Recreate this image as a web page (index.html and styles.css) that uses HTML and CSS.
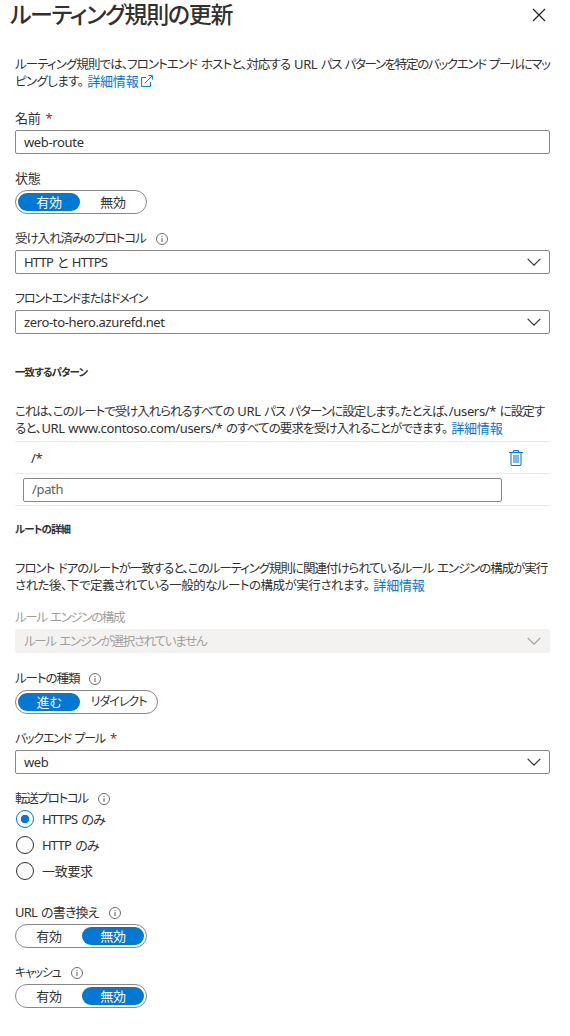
FILE: index.html
```
<!DOCTYPE html>
<html lang="ja">
<head>
    <meta charset="UTF-8">
    <meta name="viewport" content="width=device-width, initial-scale=1.0">
    <title>ルーティング規則の更新</title>
    <link rel="stylesheet" href="styles.css">
</head>
<body>

    <!-- 共通アイコン -->
    <svg class="sprite" aria-hidden="true">
        <symbol id="info" viewBox="0 0 12 12">
            <circle cx="6" cy="6" r="5.5" fill="none" stroke="#605e5c" stroke-width="0.9"/>
            <path d="M6 5v4M6 3v1" stroke="#605e5c" stroke-width="1"/>
        </symbol>
        <symbol id="chevron" viewBox="0 0 14 8">
            <path d="M.7.9 7 7.1 13.3.9" fill="none" stroke="currentColor" stroke-width="1.2"/>
        </symbol>
    </svg>

    <header class="header">
        <h1>ルーティング規則の更新</h1>
        <button class="close" type="button" aria-label="閉じる">
            <svg width="14" height="14" viewBox="0 0 14 14"><path d="M1 1l12 12M13 1L1 13" stroke="#222" stroke-width="1.2"/></svg>
        </button>
    </header>

    <main class="content">
        <p class="text">
            <span class="line"><span class="ls-9">ルーティング規則では、フロントエンド ホストと、対応する </span><span class="en">URL </span><span class="ls-14">パス パターンを特定のバックエンド プールにマッ</span></span>
            <span class="line"><span class="ls-6">ピングします。</span><a class="link" href="#">詳細情報<svg class="external" width="12" height="12" viewBox="0 0 12 12"><path d="M5 2.5H.6v8.9h8.9V7M3.8 8.2 11.2.8M7.3.6h4.1v4.1" fill="none" stroke="currentColor"/></svg></a></span>
        </p>

        <div class="field">
            <div class="label"><span class="kanji">名前</span><span class="required">*</span></div>
            <div class="input"><span class="en">web-route</span></div>
        </div>

        <div class="field">
            <div class="label"><span class="kanji">状態</span></div>
            <div class="toggle"><span class="option on">有効</span><span class="option">無効</span></div>
        </div>

        <div class="field">
            <div class="label"><span class="ls-11">受け入れ済みのプロトコル</span><svg class="info"><use href="#info"/></svg></div>
            <div class="input"><span class="mixed">HTTP と HTTPS</span><svg class="chevron"><use href="#chevron"/></svg></div>
        </div>

        <div class="field">
            <div class="label"><span class="kata">フロントエンドまたはドメイン</span></div>
            <div class="input"><span class="en">zero-to-hero.azurefd.net</span><svg class="chevron"><use href="#chevron"/></svg></div>
        </div>

        <h2 class="pattern-title">一致するパターン</h2>
        <p class="text">
            <span class="line"><span class="ls-11">これは、このルートで受け入れられるすべての </span><span class="en">URL </span><span class="ls-9">パス パターンに設定します。たとえば、</span><span class="en">/users/* </span><span class="ls-9">に設定す</span></span>
            <span class="line"><span class="ls-5">ると、</span><span class="en">URL www.contoso.com/users/* </span><span class="ls-9">のすべての要求を受け入れることができます。</span><a class="link" href="#">詳細情報</a></span>
        </p>

        <!-- パターン一覧 -->
        <div class="patterns">
            <div class="pattern">
                <span class="en value">/*</span>
                <svg class="trash" width="14" height="16" viewBox="0 0 14 16">
                    <path d="M2 3v12M12 3v12" stroke="#7cb8ec" stroke-width="2"/>
                    <path d="M4 5h6v8H4z" fill="#7cb8ec"/>
                    <path d="M0 2.5h14M4.500 2V.5h5V2M2 15.500h10" fill="none" stroke="#0078d4"/>
                </svg>
            </div>
            <div class="pattern">
                <div class="input path"><span class="en">/path</span></div>
            </div>
        </div>

        <h2 class="detail-title">ルートの詳細</h2>
        <p class="text">
            <span class="line ls-11">フロント ドアのルートが一致すると、このルーティング規則に関連付けられているルール エンジンの構成が実行</span>
            <span class="line"><span class="ls-5">された後、下で定義されている一般的なルートの構成が実行されます。</span><a class="link" href="#">詳細情報</a></span>
        </p>

        <div class="field disabled">
            <div class="label"><span class="ls-14">ルール エンジンの構成</span></div>
            <div class="input"><span class="ls-13">ルール エンジンが選択されていません</span><svg class="chevron"><use href="#chevron"/></svg></div>
        </div>

        <div class="field route-type">
            <div class="label"><span class="ls-11">ルートの種類</span><svg class="info"><use href="#info"/></svg></div>
            <div class="toggle"><span class="option on">進む</span><span class="option wide">リダイレクト</span></div>
        </div>

        <div class="field">
            <div class="label"><span class="kata">バックエンド プール</span><span class="required">*</span></div>
            <div class="input"><span class="en">web</span><svg class="chevron"><use href="#chevron"/></svg></div>
        </div>

        <div class="field radios">
            <div class="label"><span class="ls-13">転送プロトコル</span><svg class="info"><use href="#info"/></svg></div>
            <div class="radio"><span class="circle checked"></span><span class="mixed">HTTPS のみ</span></div>
            <div class="radio"><span class="circle"></span><span class="mixed">HTTP のみ</span></div>
            <div class="radio"><span class="circle"></span><span class="kanji">一致要求</span></div>
        </div>

        <div class="field">
            <div class="label"><span class="mixed">URL の書き換え</span><svg class="info"><use href="#info"/></svg></div>
            <div class="toggle"><span class="option">有効</span><span class="option on">無効</span></div>
        </div>

        <div class="field">
            <div class="label"><span class="kata">キャッシュ</span><svg class="info"><use href="#info"/></svg></div>
            <div class="toggle"><span class="option">有効</span><span class="option on">無効</span></div>
        </div>
    </main>

</body>
</html>
```
FILE: styles.css
```
* {
    box-sizing: border-box;
}
body {
    margin: 0;
    background-color: #fff;
    color: #323130;
    font-family: "Noto Sans", "Noto Sans CJK JP", sans-serif;
    font-size: 12.5px;
    line-height: 17px;
    font-feature-settings: "palt";
    word-spacing: 1.5px;
}
.sprite {
    display: none;
}
.header {
    display: flex;
    justify-content: space-between;
    height: 56px;
    padding: 0 24px 0 10px;
}
h1 {
    margin: 0;
    font-size: 23px;
    font-weight: 500;
    line-height: 29px;
    letter-spacing: -1.35px;
}
.close {
    display: flex;
    align-items: center;
    height: 30px;
    padding: 0;
    border: none;
    background: none;
}
.content {
    width: 535px;
    margin-left: 15px;
}

/* テキスト */
.text {
    margin: 0;
}
.line {
    display: block;
    height: 17px;
    white-space: nowrap;
}
.en {
    font-size: 13px;
    letter-spacing: -0.35px;
    word-spacing: 0.5px;
}
.mixed {
    font-size: 13px;
    letter-spacing: -0.8px;
    word-spacing: 1.5px;
}
.kanji {
    font-size: 13px;
    letter-spacing: -0.3px;
}
.kata {
    font-size: 12px;
    letter-spacing: -1.2px;
}
.ls-5 { letter-spacing: -0.5px; }
.ls-6 { letter-spacing: -0.6px; }
.ls-9 { letter-spacing: -0.9px; }
.ls-11 { letter-spacing: -1.05px; }
.ls-13 { letter-spacing: -1.3px; }
.ls-14 { letter-spacing: -1.35px; }
.link {
    margin-left: 4px;
    color: #0078d4;
    font-size: 13px;
    letter-spacing: -0.2px;
    text-decoration: none;
}
.external {
    margin-left: 3px;
    vertical-align: -1px;
}
h2 {
    margin: 0;
    font-size: 10.5px;
    font-weight: 600;
    line-height: 16px;
    letter-spacing: -0.9px;
}
.pattern-title {
    margin: 30px 0 23px;
}
.detail-title {
    margin: 15px 0 23px;
}

/* フォーム */
.field {
    margin-top: 12px;
}
.text + .field {
    margin-top: 16px;
}
.label {
    display: flex;
    align-items: center;
    height: 24px;
}
.required {
    margin-left: 5px;
    color: #a4262c;
    font-size: 13px;
}
.info {
    width: 12px;
    height: 12px;
    margin: 2px 0 0 10px;
}
.input {
    display: flex;
    align-items: center;
    justify-content: space-between;
    height: 24px;
    padding: 0 8px;
    border: 1px solid #8a8886;
    border-radius: 2px;
}
.chevron {
    width: 14px;
    height: 8px;
}
.toggle {
    display: inline-flex;
    gap: 2px;
    height: 24px;
    padding: 2px;
    border: 1px solid #8a8886;
    border-radius: 12px;
    vertical-align: top;
}
.option {
    width: 62px;
    height: 18px;
    border-radius: 9px;
    font-size: 13px;
    line-height: 18px;
    letter-spacing: -0.3px;
    text-align: center;
}
.option.wide {
    width: 73px;
    font-size: 12px;
    letter-spacing: -1px;
}
.option.on {
    background-color: #0078d4;
    color: #fff;
}
.text + .field.disabled {
    margin-top: 11px;
}
.field.route-type {
    margin-top: 13px;
}
.disabled {
    color: #a19f9d;
}
.disabled .input {
    border-color: #f3f2f1;
    background-color: #f3f2f1;
}

/* パターン */
.patterns {
    margin-top: 4px;
    border-bottom: 1px solid #edebe9;
}
.pattern {
    display: flex;
    align-items: center;
    justify-content: space-between;
    height: 32px;
    padding: 0 27px 0 8px;
    border-top: 1px solid #edebe9;
}
.value {
    padding: 2px 0 0 8px;
}
.path {
    width: 479px;
    color: #605e5c;
}

/* ラジオボタン */
.radio {
    display: flex;
    align-items: center;
    gap: 8px;
    height: 18px;
    margin-bottom: 8px;
    padding-left: 1px;
}
.circle {
    width: 18px;
    height: 18px;
    border: 1px solid #323130;
    border-radius: 50%;
}
.circle.checked {
    border-color: #0078d4;
    background: radial-gradient(circle, #0078d4 4px, transparent 4.5px);
}
.radios + .field {
    margin-top: 20px;
}
```
